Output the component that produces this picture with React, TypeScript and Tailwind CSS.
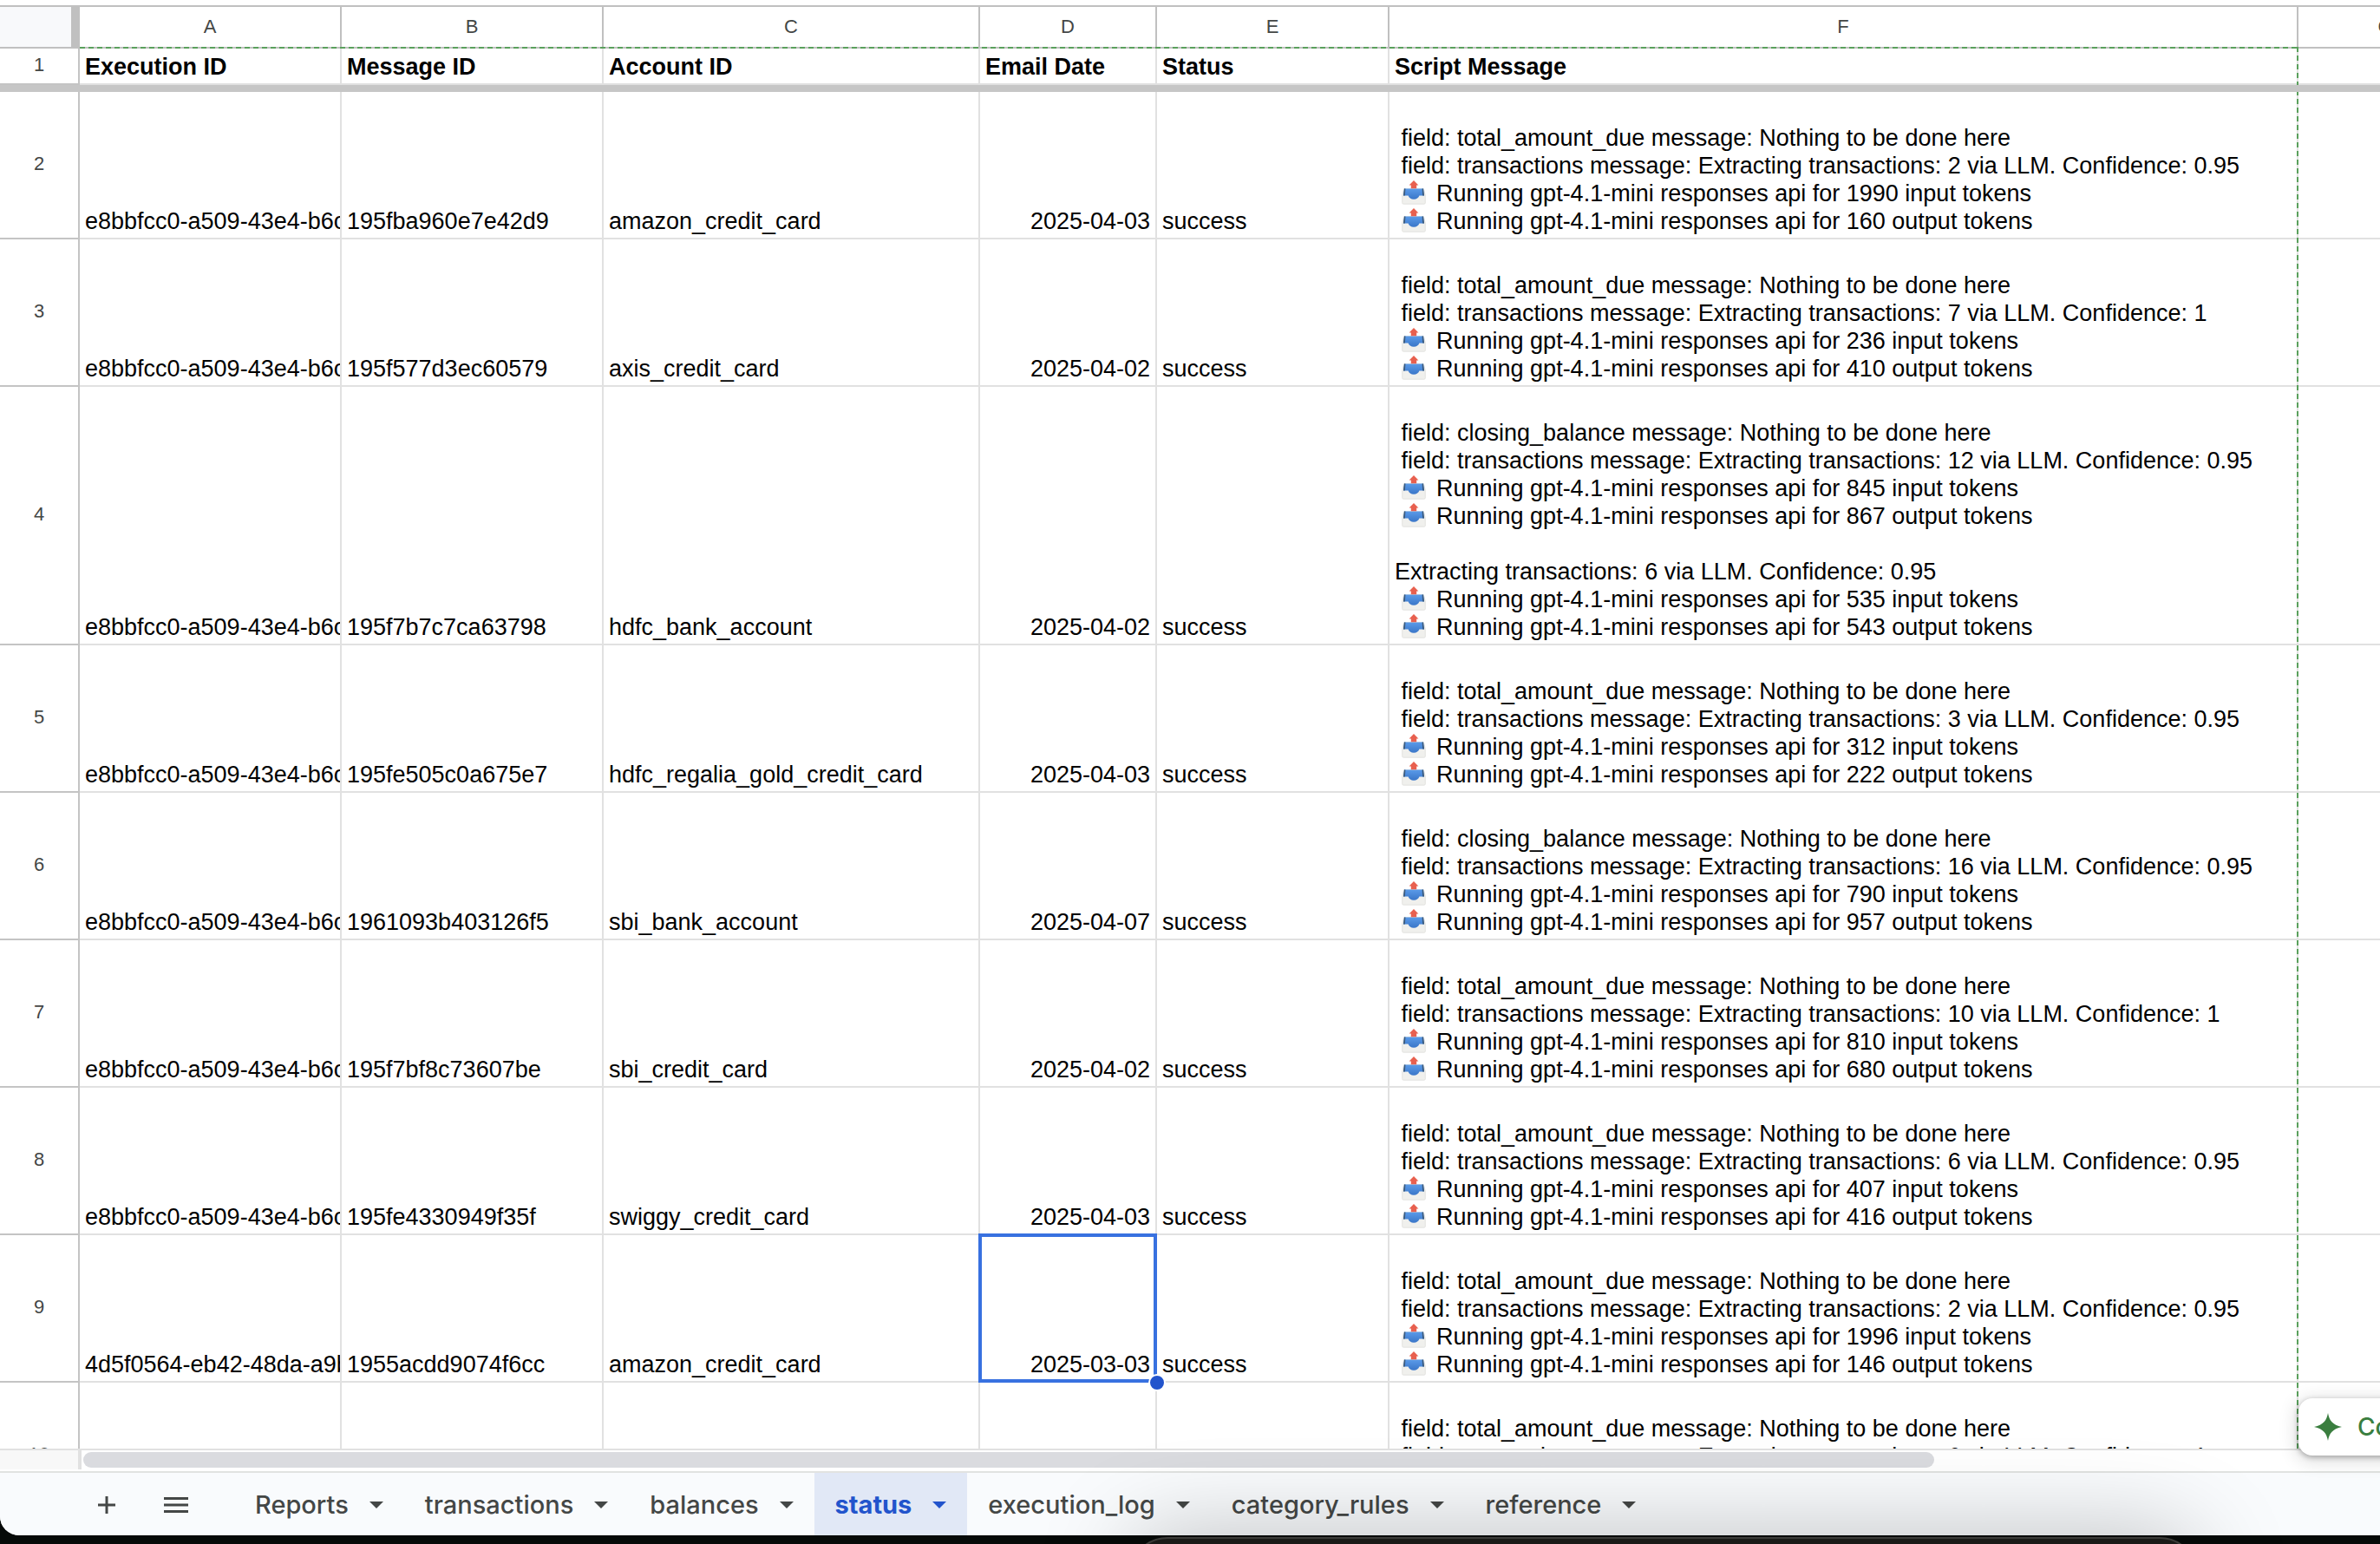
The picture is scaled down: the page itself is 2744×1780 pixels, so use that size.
import type { ReactNode } from "react";

type Line = string;

interface Row {
  n: number;
  exec: string;
  msg: string;
  account: string;
  date: string;
  status: string;
  lines: Line[];
  selected?: boolean;
}

const OUT = "@";

function standard(first: string, count: string, conf: string, input: string, output: string): Line[] {
  return [
    "",
    ` field: ${first} message: Nothing to be done here`,
    ` field: transactions message: Extracting transactions: ${count} via LLM. Confidence: ${conf}`,
    `${OUT} Running gpt-4.1-mini responses api for ${input} input tokens`,
    `${OUT} Running gpt-4.1-mini responses api for ${output} output tokens`,
  ];
}

const E8 = "e8bbfcc0-a509-43e4-b6c";
const D5 = "4d5f0564-eb42-48da-a9b";

const rows: Row[] = [
  { n: 2, exec: E8, msg: "195fba960e7e42d9", account: "amazon_credit_card", date: "2025-04-03", status: "success", lines: standard("total_amount_due", "2", "0.95", "1990", "160") },
  { n: 3, exec: E8, msg: "195f577d3ec60579", account: "axis_credit_card", date: "2025-04-02", status: "success", lines: standard("total_amount_due", "7", "1", "236", "410") },
  {
    n: 4,
    exec: E8,
    msg: "195f7b7c7ca63798",
    account: "hdfc_bank_account",
    date: "2025-04-02",
    status: "success",
    lines: [
      ...standard("closing_balance", "12", "0.95", "845", "867"),
      "",
      "Extracting transactions: 6 via LLM. Confidence: 0.95",
      `${OUT} Running gpt-4.1-mini responses api for 535 input tokens`,
      `${OUT} Running gpt-4.1-mini responses api for 543 output tokens`,
    ],
  },
  { n: 5, exec: E8, msg: "195fe505c0a675e7", account: "hdfc_regalia_gold_credit_card", date: "2025-04-03", status: "success", lines: standard("total_amount_due", "3", "0.95", "312", "222") },
  { n: 6, exec: E8, msg: "1961093b403126f5", account: "sbi_bank_account", date: "2025-04-07", status: "success", lines: standard("closing_balance", "16", "0.95", "790", "957") },
  { n: 7, exec: E8, msg: "195f7bf8c73607be", account: "sbi_credit_card", date: "2025-04-02", status: "success", lines: standard("total_amount_due", "10", "1", "810", "680") },
  { n: 8, exec: E8, msg: "195fe4330949f35f", account: "swiggy_credit_card", date: "2025-04-03", status: "success", lines: standard("total_amount_due", "6", "0.95", "407", "416") },
  { n: 9, exec: D5, msg: "1955acdd9074f6cc", account: "amazon_credit_card", date: "2025-03-03", status: "success", lines: standard("total_amount_due", "2", "0.95", "1996", "146"), selected: true },
  { n: 10, exec: "", msg: "", account: "", date: "", status: "", lines: standard("total_amount_due", "6", "1", "", "") },
];

const columns = ["A", "B", "C", "D", "E", "F", "G"];
const titles = ["Execution ID", "Message ID", "Account ID", "Email Date", "Status", "Script Message", ""];

const tabs = ["Reports", "transactions", "balances", "status", "execution_log", "category_rules", "reference"];

function Outbox() {
  return (
    <svg viewBox="0 0 28 28" className="mr-[5px] inline-block h-7 w-7 align-[-4px]" role="img" aria-label="Outbox tray">
      <defs>
        <linearGradient id="tray" x1="0" y1="0" x2="0" y2="1">
          <stop offset="0" stopColor="#5a9ae8" />
          <stop offset="1" stopColor="#3a76c8" />
        </linearGradient>
      </defs>
      <path d="M2.600 9.600h22.800L27.300 17v8.800a1.400 1.400 0 0 1-1.400 1.400H2.100a1.400 1.400 0 0 1-1.400-1.400V17z" fill="#f0f0ed" stroke="#dededa" strokeWidth=".8" />
      <path d="M3 9.600h22l1 8h-5.600c-.8 2.400-3.200 4.200-6.400 4.200s-5.600-1.800-6.400-4.200H2z" fill="url(#tray)" />
      <path d="M3 9.600h1.400l-.6 8H2zM25 9.600h-1.400l.6 8H26z" fill="#3b5878" />
      <path d="M14 0l5.400 5.400h-2.200v3.900h-6.400V5.400H8.600z" fill="#e8604f" />
    </svg>
  );
}

function Caret() {
  return (
    <svg viewBox="0 0 16 8" className="h-2 w-4" aria-hidden="true">
      <path d="M0 0h16L8 8z" fill="currentColor" />
    </svg>
  );
}

function Cell({ children, className = "" }: { children?: ReactNode; className?: string }) {
  return (
    <td className={"relative border-r-2 border-b-2 border-[#e1e1e1] px-1.5 pt-[5px] pb-[3px] align-bottom " + className}>
      {children}
    </td>
  );
}

function RowNumber({ n }: { n: number }) {
  return (
    <th scope="row" className="border-r-2 border-b-2 border-[#c4c4c4] p-0 pb-[3px] text-center align-middle text-[22px] leading-7 font-normal text-[#444746]">
      {n}
    </th>
  );
}

export default function App() {
  return (
    <div className="relative flex h-screen flex-col overflow-hidden bg-[#060a08] pb-2.5 font-['Liberation_Sans',Arial,sans-serif]">
      <main className="relative flex min-h-0 flex-1 flex-col overflow-hidden rounded-bl-[22px] bg-white pt-1.5">
        <div className="relative min-h-0 flex-1 overflow-hidden border-t-2 border-b-2 border-t-[#c0c0c0] border-b-[#e1e1e1]">
          <table className="w-[2852px] table-fixed border-separate border-spacing-0 text-[27px] leading-8 text-black">
            <colgroup>
              <col className="w-[92px]" />
              <col className="w-[302px]" />
              <col className="w-[302px]" />
              <col className="w-[434px]" />
              <col className="w-[204px]" />
              <col className="w-[268px]" />
              <col className="w-[1048px]" />
              <col className="w-[202px]" />
            </colgroup>
            <thead>
              <tr className="h-12">
                <td className="border-r-10 border-b-2 border-[#c0c0c0] bg-[#f8f9fb] p-0" />
                {columns.map((c) => (
                  <th key={c} scope="col" className="border-r-2 border-b-2 border-[#c0c0c0] p-0 text-center align-middle text-[22px] leading-7 font-normal text-[#444746]">
                    {c}
                  </th>
                ))}
              </tr>
            </thead>
            <tbody>
              <tr>
                <RowNumber n={1} />
                {titles.map((t) => (
                  <Cell key={t} className="font-bold whitespace-nowrap">
                    {t}
                  </Cell>
                ))}
              </tr>
              <tr className="h-2">
                <td colSpan={8} className="relative z-10 bg-[#c6c6c6] p-0" />
              </tr>
              {rows.map((r) => (
                <tr key={r.n}>
                  <RowNumber n={r.n} />
                  <Cell className="overflow-hidden whitespace-nowrap">{r.exec}</Cell>
                  <Cell className="whitespace-nowrap">{r.msg}</Cell>
                  <Cell className="whitespace-nowrap">{r.account}</Cell>
                  <Cell className="text-right whitespace-nowrap">
                    {r.date}
                    {r.selected && (
                      <span className="absolute -inset-0.5 z-10 border-4 border-[#3871e0]">
                        <span className="absolute -right-3.5 -bottom-3.5 h-5 w-5 rounded-full border-2 border-white bg-[#2254cc]" />
                      </span>
                    )}
                  </Cell>
                  <Cell className="whitespace-nowrap">{r.status}</Cell>
                  <Cell>
                    {r.lines.map((line, i) => (
                      <div key={i} className="h-8 whitespace-pre">
                        {line.startsWith(OUT) ? (
                          <>
                            {" "}
                            <Outbox />
                            {line.slice(1)}
                          </>
                        ) : (
                          line
                        )}
                      </div>
                    ))}
                  </Cell>
                  <Cell />
                </tr>
              ))}
            </tbody>
          </table>
          <div className="absolute top-[46px] bottom-0 left-[92px] w-[2558px]">
            <div className="h-0.5 bg-[repeating-linear-gradient(90deg,#5aa05c_0_6px,transparent_6px_10px)]" />
            <div className="absolute top-0 right-0 bottom-0 w-0.5 bg-[repeating-linear-gradient(180deg,#5aa05c_0_6px,transparent_6px_10px)]" />
          </div>
        </div>

        <div className="flex h-6 items-start">
          <div className="h-[22px] w-[94px] border-r-4 border-[#e1e1e1] bg-[#f8f8f8]" />
          <div className="flex-1 pt-0.5 pl-0.5">
            <div className="h-[18px] w-[2134px] rounded-full bg-[#dadbdf]" />
          </div>
        </div>

        <nav className="flex h-[74px] items-stretch border-t-2 border-[#e1e3e1] bg-[#f9fbfd] font-['Inter',sans-serif] text-[29px] leading-9 font-medium text-[#444746]">
          <div className="flex w-[270px] items-center pt-0.5">
            <button type="button" aria-label="Add sheet" className="ml-[113px] flex w-5 items-center justify-center">
              <svg viewBox="0 0 20 20" className="h-5 w-5" aria-hidden="true">
                <path d="M10 0v20M0 10h20" stroke="currentColor" strokeWidth="3" />
              </svg>
            </button>
            <button type="button" aria-label="All sheets" className="ml-14 flex w-7 items-center justify-center">
              <svg viewBox="0 0 28 18" className="h-[18px] w-7" aria-hidden="true">
                <path d="M0 1.500h28M0 9h28M0 16.500h28" stroke="currentColor" strokeWidth="3" />
              </svg>
            </button>
          </div>
          {tabs.map((t) => (
            <button
              key={t}
              type="button"
              className={
                t === "status"
                  ? "flex items-center gap-6 bg-[#e1e8f6] px-6 pt-0.5 font-bold text-[#2254cc]"
                  : "flex items-center gap-6 px-6 pt-0.5"
              }
            >
              {t}
              <Caret />
            </button>
          ))}
        </nav>

        <button
          type="button"
          className="absolute bottom-[92px] left-[2650px] flex h-[66px] items-center gap-[18px] rounded-2xl bg-white pr-8 pl-[18px] font-['Inter',sans-serif] text-[28px] font-medium whitespace-nowrap text-[#3a7e3f] shadow-[0_2px_6px_rgba(0,0,0,0.3),0_4px_20px_4px_rgba(0,0,0,0.12)]"
        >
          <svg viewBox="0 0 32 32" className="h-8 w-8" aria-hidden="true">
            <path d="M16 0c1.600 8.500 5 13.500 16 16-11 2.500-14.400 7.500-16 16-1.600-8.500-5-13.500-16-16C11 13.500 14.400 8.500 16 0z" fill="currentColor" />
          </svg>
          Convert to table
        </button>
      </main>

      <div className="pointer-events-none absolute top-[calc(100%-8px)] left-[1302px] h-24 w-[1232px] rounded-[44px] border-2 border-[#3b3b38] bg-[#1a1a17] shadow-[0_0_110px_rgba(0,0,0,0.26)]" />
    </div>
  );
}
